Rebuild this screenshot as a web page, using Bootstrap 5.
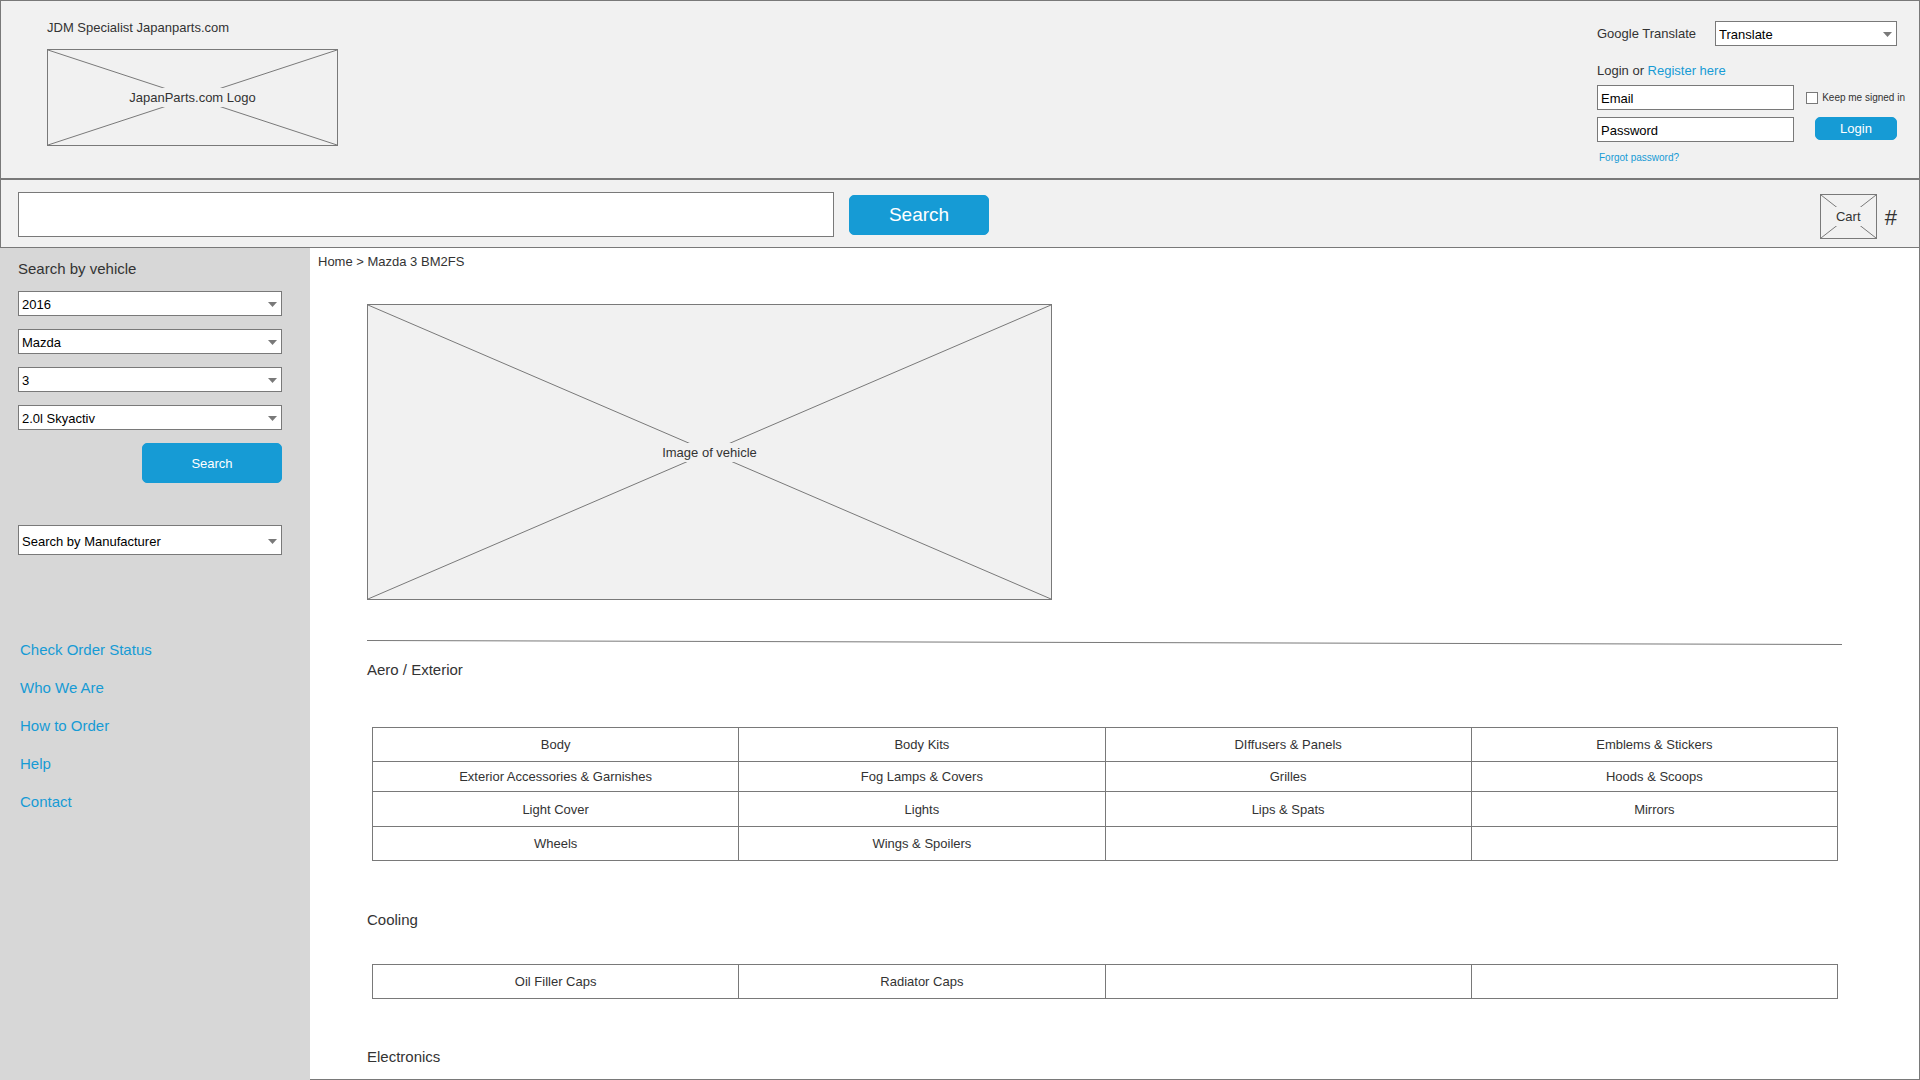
<!DOCTYPE html>
<html lang="en">
<head>
<meta charset="utf-8">
<meta name="viewport" content="width=device-width, initial-scale=1">
<title>JapanParts.com – Mazda 3 BM2FS</title>
<link href="https://cdn.jsdelivr.net/npm/bootstrap@5.3.0/dist/css/bootstrap.min.css" rel="stylesheet">
<style>
  :root { --line: #797979; --fill: #f1f1f1; --brand: #169bd5; --ink: #333; }
  body { font-family: "Liberation Sans", Arial, sans-serif; font-size: 13px; line-height: 15px; color: var(--ink); background: #fff; }
  a { color: var(--brand); text-decoration: none; }
  .site-top, .search-strip { background: var(--fill); border: 1px solid var(--line); }
  .site-top { padding: 19px 14px 14px 46px; }
  .search-strip { padding: 10px 22px 8px 17px; }

  /* crossed image placeholders */
  .ph-box { position: relative; border: 1px solid var(--line); background: var(--fill); }
  .ph-box svg { position: absolute; inset: 0; width: 100%; height: 100%; }
  .ph-box line, .divider line { stroke: var(--line); stroke-width: 1; }
  .ph-box span { position: relative; background: var(--fill); line-height: 19px; }
  .ph-logo { width: 291px; height: 97px; margin-top: 14px; }
  .ph-cart { width: 57px; height: 45px; }
  .ph-vehicle { max-width: 685px; height: 296px; }

  /* controls */
  .form-control, .form-select { height: 25px; padding: 2px 3px 0; font-size: 13px; line-height: 15px; color: #000; background-color: #fff; border: 1px solid var(--line); border-radius: 0; }
  .form-control::placeholder { color: #000; opacity: 1; }
  .form-select { padding-right: 20px; background-size: 9px 5px; background-position: right 4px top 55%;
    background-image: url("data:image/svg+xml,%3Csvg xmlns='http://www.w3.org/2000/svg' viewBox='0 0 9 5'%3E%3Cpath fill='%23797979' d='M0 0h9L4.5 5z'/%3E%3C/svg%3E"); }
  .form-select.tall { height: 30px; margin-top: 42px; }
  .btn-primary { --bs-btn-bg: var(--brand); --bs-btn-border-color: var(--brand); --bs-btn-border-radius: 5px; --bs-btn-padding-y: 0; --bs-btn-font-size: 13px; --bs-btn-line-height: 15px; width: 140px; height: 40px; }
  .account { width: 308px; padding-top: 1px; }
  .account .form-control { width: 197px; }
  .account .form-select { width: 182px; }
  .account .btn { width: 82px; height: 23px; }
  .account .form-check-input { width: 12px; height: 12px; border: 1px solid var(--line); border-radius: 0; background-color: #fff; }
  .login-intro { margin: 17px 0 7px; }
  .login-row { margin-bottom: 7px; }
  .fine { font-size: 10px; line-height: 12px; }
  .forgot { padding: 3px 0 0 2px; }
  .search-strip .form-control { width: 42.5vw; height: 45px; }
  .search-strip .btn { font-size: 19px; line-height: 22px; margin-left: 15px; }
  .cart-count { font-size: 22px; line-height: 25px; padding-top: 2px; }

  /* body */
  .side { width: 310px; background: #d7d7d7; padding: 12px 28px 28px 18px; }
  .side h2, .cat-title { font-size: 15px; line-height: 17px; font-weight: 400; margin: 0; }
  .side form { gap: 13px; padding-top: 14px; }
  .side .nav { margin: 86px 0 0 2px; gap: 21px; font-size: 15px; line-height: 17px; }
  .page-main { border: solid var(--line); border-width: 0 1px 1px 0; padding: 6px 77px 12px 57px; }
  .crumbs { margin: 0 0 35px -49px; }
  .divider { display: block; width: 100%; height: 5px; margin: 40px 0 16px; }
  .cat-grid { margin: 36px 4px 49px 5px; }
  .cat-grid.first { margin: 49px 4px 50px 5px; }
  .cat-grid table { table-layout: fixed; color: var(--ink); border-collapse: collapse; }
  .cat-grid td { height: 34px; padding: 0; border: 1px solid var(--line); background: transparent; color: var(--ink); }
  .cat-grid .row-s td { height: 30px; }
  .cat-grid .row-l td { height: 35px; }
</style>
<script src="https://cdn.jsdelivr.net/npm/bootstrap@5.3.0/dist/js/bootstrap.bundle.min.js" defer></script>
</head>
<body class="d-flex flex-column min-vh-100">

<header>
  <div class="site-top d-flex justify-content-between">
    <div>
      <div>JDM Specialist Japanparts.com</div>
      <div class="ph-box ph-logo d-flex align-items-center justify-content-center">
        <svg aria-hidden="true"><line x1="0" y1="0" x2="100%" y2="100%"/><line x1="0" y1="100%" x2="100%" y2="0"/></svg>
        <span>JapanParts.com Logo</span>
      </div>
    </div>
    <form class="account">
      <div class="d-flex align-items-center justify-content-between pe-2">
        <label for="translate">Google Translate</label>
        <select id="translate" class="form-select"><option>Translate</option></select>
      </div>
      <div class="login-intro">Login or <a href="#">Register here</a></div>
      <div class="login-row d-flex align-items-center">
        <input type="email" class="form-control" placeholder="Email" aria-label="Email">
        <input type="checkbox" class="form-check-input m-0 ms-auto" id="keep">
        <label for="keep" class="fine ms-1 text-nowrap">Keep me signed in</label>
      </div>
      <div class="login-row d-flex align-items-start justify-content-between pe-2">
        <input type="password" class="form-control" placeholder="Password" aria-label="Password">
        <button type="button" class="btn btn-primary">Login</button>
      </div>
      <a href="#" class="fine forgot d-block">Forgot password?</a>
    </form>
  </div>

  <div class="search-strip d-flex align-items-center">
    <input type="search" class="form-control" aria-label="Search parts">
    <button type="button" class="btn btn-primary">Search</button>
    <div class="d-flex align-items-center gap-2 ms-auto pt-1">
      <div class="ph-box ph-cart d-flex align-items-center justify-content-center">
        <svg aria-hidden="true"><line x1="0" y1="0" x2="100%" y2="100%"/><line x1="0" y1="100%" x2="100%" y2="0"/></svg>
        <span>Cart</span>
      </div>
      <span class="cart-count">#</span>
    </div>
  </div>
</header>

<div class="d-flex flex-grow-1">
  <aside class="side flex-shrink-0">
    <h2>Search by vehicle</h2>
    <form class="d-flex flex-column">
      <select class="form-select" aria-label="Year"><option>2016</option></select>
      <select class="form-select" aria-label="Make"><option>Mazda</option></select>
      <select class="form-select" aria-label="Model"><option>3</option></select>
      <select class="form-select" aria-label="Engine"><option>2.0l Skyactiv</option></select>
      <button type="button" class="btn btn-primary align-self-end">Search</button>
    </form>
    <select class="form-select tall" aria-label="Manufacturer"><option>Search by Manufacturer</option></select>
    <nav class="nav flex-column">
      <a href="#">Check Order Status</a>
      <a href="#">Who We Are</a>
      <a href="#">How to Order</a>
      <a href="#">Help</a>
      <a href="#">Contact</a>
    </nav>
  </aside>

  <main class="page-main flex-grow-1">
    <div class="crumbs">Home &gt; Mazda 3 BM2FS</div>
    <div class="ph-box ph-vehicle d-flex align-items-center justify-content-center">
      <svg aria-hidden="true"><line x1="0" y1="0" x2="100%" y2="100%"/><line x1="0" y1="100%" x2="100%" y2="0"/></svg>
      <span>Image of vehicle</span>
    </div>
    <svg class="divider" aria-hidden="true"><line x1="0" y1="0.5" x2="100%" y2="4.5"/></svg>

    <h2 class="cat-title">Aero / Exterior</h2>
    <div class="cat-grid first">
      <table class="table text-center align-middle mb-0">
        <tbody>
          <tr><td>Body</td><td>Body Kits</td><td>DIffusers &amp; Panels</td><td>Emblems &amp; Stickers</td></tr>
          <tr class="row-s"><td>Exterior Accessories &amp; Garnishes</td><td>Fog Lamps &amp; Covers</td><td>Grilles</td><td>Hoods &amp; Scoops</td></tr>
          <tr class="row-l"><td>Light Cover</td><td>Lights</td><td>Lips &amp; Spats</td><td>Mirrors</td></tr>
          <tr><td>Wheels</td><td>Wings &amp; Spoilers</td><td></td><td></td></tr>
        </tbody>
      </table>
    </div>

    <h2 class="cat-title">Cooling</h2>
    <div class="cat-grid">
      <table class="table text-center align-middle mb-0">
        <tbody>
          <tr><td>Oil Filler Caps</td><td>Radiator Caps</td><td></td><td></td></tr>
        </tbody>
      </table>
    </div>

    <h2 class="cat-title">Electronics</h2>
  </main>
</div>
</body>
</html>
